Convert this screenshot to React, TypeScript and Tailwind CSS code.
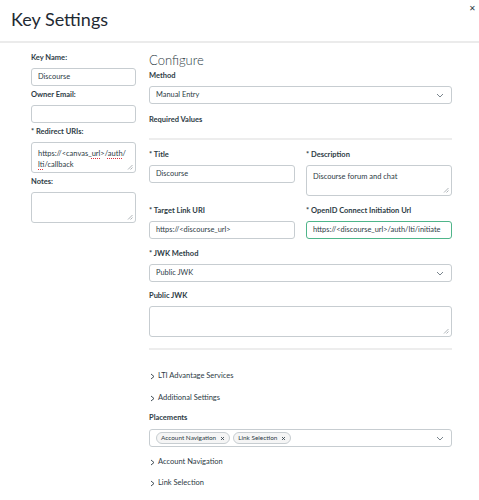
import React from "react";

const font = { fontFamily: "Lato, 'Open Sans', sans-serif" };

function Label({ children, className = "" }: { children: React.ReactNode; className?: string }) {
  return (
    <div className={`h-[12px] leading-[12px] text-[7.5px] font-bold text-[#2d3b45] ${className}`}>{children}</div>
  );
}

function Input({ value, className = "", focus = false }: { value?: string; className?: string; focus?: boolean }) {
  return (
    <div
      className={`h-[18px] rounded-[3px] border bg-white px-[6px] flex items-center text-[7.4px] text-[#2d3b45] ${
        focus ? "border-[#4fb58a] border-[1.5px]" : "border-[#c7cdd1]"
      } ${className}`}
    >
      {value}
    </div>
  );
}

function Grip() {
  return (
    <svg className="absolute right-[2px] bottom-[2px]" width="6" height="6" viewBox="0 0 6 6">
      <path d="M5.5 1 L1 5.5 M5.5 3.5 L3.5 5.5" stroke="#9aa1a6" strokeWidth="0.8" />
    </svg>
  );
}

function Area({ children, h = 31, className = "" }: { children?: React.ReactNode; h?: number; className?: string }) {
  return (
    <div
      className={`relative rounded-[3px] border border-[#c7cdd1] bg-white px-[6px] pt-[5px] text-[7.5px] leading-[11px] text-[#2d3b45] ${className}`}
      style={{ height: h }}
    >
      {children}
      <Grip />
    </div>
  );
}

function Chevron() {
  return (
    <svg width="8" height="5" viewBox="0 0 8 5" className="shrink-0">
      <path d="M1 1 L4 4 L7 1" fill="none" stroke="#6b7780" strokeWidth="0.9" />
    </svg>
  );
}

function Select({ value, children }: { value?: string; children?: React.ReactNode }) {
  return (
    <div className="h-[18px] rounded-[3px] border border-[#c7cdd1] bg-white pl-[6px] pr-[7px] flex items-center justify-between text-[7.4px] text-[#2d3b45]">
      {children ?? <span>{value}</span>}
      <Chevron />
    </div>
  );
}

function Toggle({ children, className = "" }: { children: React.ReactNode; className?: string }) {
  return (
    <div className={`h-[12px] flex items-center gap-[3px] text-[7.5px] text-[#2d3b45] ${className}`}>
      <svg width="5" height="7" viewBox="0 0 5 7" className="ml-[1px]">
        <path d="M1 1 L4 3.5 L1 6" fill="none" stroke="#2d3b45" strokeWidth="0.9" />
      </svg>
      <span>{children}</span>
    </div>
  );
}

function Chip({ children }: { children: React.ReactNode }) {
  return (
    <div className="h-[12px] rounded-full border border-[#c7cdd1] bg-[#f5f5f5] px-[4px] flex items-center gap-[4px] text-[6.4px] text-[#2d3b45]">
      <span>{children}</span>
      <svg width="5" height="5" viewBox="0 0 5 5">
        <path d="M1 1 L4 4 M4 1 L1 4" stroke="#2d3b45" strokeWidth="0.8" />
      </svg>
    </div>
  );
}

const Spell = ({ children }: { children: React.ReactNode }) => (
  <span className="underline decoration-dotted decoration-[#e0303a] decoration-[1px] underline-offset-[2px]">{children}</span>
);

export default function App() {
  return (
    <div className="w-[479px] h-[500px] bg-white overflow-hidden" style={font}>
      <div className="h-[41px] relative">
        <div className="pl-[11px] pt-[7px] text-[18px] leading-[24px] text-[#1f2a33]">Key Settings</div>
        <div className="absolute right-[3px] top-[2px] text-[8px] text-[#2d3b45]">✕</div>
      </div>
      <div className="h-[2px] bg-[#ebebeb]" />
      <div className="flex gap-[13px] pl-[31px] pt-[8px]">
        <div className="w-[105px] flex flex-col">
          <Label className="mt-[1px]">Key Name:</Label>
          <Input value="Discourse" className="mt-[4px]" />
          <Label className="mt-[3px]">Owner Email:</Label>
          <Input className="mt-[4px]" />
          <Label className="mt-[3px]">* Redirect URIs:</Label>
          <Area className="mt-[4px]" h={31}>
            https://&lt;canvas_<Spell>url</Spell>&gt;/<Spell>auth</Spell>/
            <br />
            <Spell>lti</Spell>/callback
          </Area>
          <Label className="mt-[3px]">Notes:</Label>
          <Area className="mt-[4px]" h={31} />
        </div>
        <div className="w-[303px] flex flex-col">
          <div className="h-[18px] leading-[18px] text-[13px] font-light text-[#2d3b45]">Configure</div>
          <Label className="mt-[1px]">Method</Label>
          <div className="mt-[4px]">
            <Select value="Manual Entry" />
          </div>
          <Label className="mt-[10px]">Required Values</Label>
          <div className="mt-[12px] h-[2px] bg-[#ededed]" />
          <div className="mt-[9px] grid grid-cols-2 gap-x-[11px]">
            <div className="flex flex-col">
              <Label>* Title</Label>
              <Input value="Discourse" className="mt-[4px]" />
            </div>
            <div className="flex flex-col">
              <Label>* Description</Label>
              <Area className="mt-[4px]" h={31}>
                Discourse forum and chat
              </Area>
            </div>
            <div className="flex flex-col mt-[9px]">
              <Label>* Target Link URI</Label>
              <Input value="https://<discourse_url>" className="mt-[4px]" />
            </div>
            <div className="flex flex-col mt-[9px]">
              <Label>* OpenID Connect Initiation Url</Label>
              <Input value="https://<discourse_url>/auth/lti/initiate" className="mt-[4px]" focus />
            </div>
          </div>
          <Label className="mt-[9px]">* JWK Method</Label>
          <div className="mt-[4px]">
            <Select value="Public JWK" />
          </div>
          <Label className="mt-[8px]">Public JWK</Label>
          <Area className="mt-[4px]" h={31} />
          <div className="mt-[11px] h-[2px] bg-[#ededed]" />
          <Toggle className="mt-[20px]">LTI Advantage Services</Toggle>
          <Toggle className="mt-[10px]">Additional Settings</Toggle>
          <Label className="mt-[8px]">Placements</Label>
          <div className="mt-[5px]">
            <Select>
              <div className="flex gap-[3px]">
                <Chip>Account Navigation</Chip>
                <Chip>Link Selection</Chip>
              </div>
            </Select>
          </div>
          <Toggle className="mt-[9px]">Account Navigation</Toggle>
          <Toggle className="mt-[9px]">Link Selection</Toggle>
        </div>
      </div>
    </div>
  );
}
